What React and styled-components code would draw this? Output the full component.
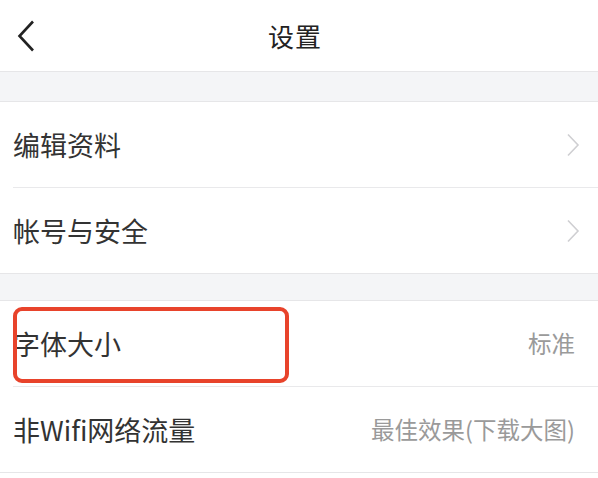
import React from 'react';
import styled, { createGlobalStyle } from 'styled-components';

const GlobalStyle = createGlobalStyle`
  html, body {
    margin: 0;
    padding: 0;
    background: #fff;
  }
  body {
    font-family: 'Noto Sans CJK SC', 'Noto Sans', sans-serif;
  }
`;

const Page = styled.div`
  width: 598px;
  min-height: 478px;
  background: #fff;
`;

const Header = styled.div`
  height: 71px;
  display: flex;
  align-items: center;
  justify-content: center;
  position: relative;
  border-bottom: 1px solid #e6e6e8;
`;

const BackButton = styled.button`
  position: absolute;
  left: 14px;
  top: 18px;
  width: 24px;
  height: 36px;
  padding: 0;
  border: none;
  background: none;
  display: flex;
  align-items: center;
  justify-content: center;
`;

const Title = styled.h1`
  margin: 0 8px 0 0;
  font-size: 26px;
  font-weight: 400;
  color: #222;
  letter-spacing: 1px;
`;

const Gap = styled.div`
  height: ${(props) => props.h}px;
  background: #f4f5f7;
`;

const Section = styled.div`
  border-top: 1px solid #e6e6e8;
  border-bottom: 1px solid #e6e6e8;
  background: #fff;
`;

const Row = styled.div`
  height: 85px;
  display: flex;
  align-items: center;
  justify-content: space-between;
  padding: 0 18px 0 13px;
  position: relative;
  & + & {
    border-top: 1px solid transparent;
  }
  & + &::before {
    content: '';
    position: absolute;
    left: 13px;
    right: 0;
    top: -1px;
    height: 1px;
    background: #e9e9eb;
  }
`;

const Label = styled.span`
  font-size: 27px;
  color: #333;
  line-height: 1;
`;

const Value = styled.span`
  font-size: 23.5px;
  color: #9a9a9a;
  line-height: 1;
  margin-right: 5px;
`;

const Highlight = styled.div`
  position: absolute;
  left: 13px;
  top: 6px;
  width: 268px;
  height: 68px;
  border: 4px solid #e8432b;
  border-radius: 9px;
  pointer-events: none;
`;

const Chevron = () => (
  <svg width="14" height="24" viewBox="0 0 14 24">
    <path d="M2 1.5 L12 12 L2 22.5" fill="none" stroke="#cfcfd2" strokeWidth="1.6" />
  </svg>
);

const BackIcon = () => (
  <svg width="20" height="32" viewBox="0 0 20 32">
    <path d="M17 1.5 L3.5 16 L17 30.5" fill="none" stroke="#222" strokeWidth="2.6" />
  </svg>
);

const sections = [
  [
    { label: '编辑资料', arrow: true },
    { label: '帐号与安全', arrow: true },
  ],
  [
    { label: '字体大小', value: '标准', marked: true },
    { label: '非Wifi网络流量', value: '最佳效果(下载大图)' },
  ],
];

function App() {
  return (
    <Page>
      <GlobalStyle />
      <Header>
        <BackButton aria-label="返回">
          <BackIcon />
        </BackButton>
        <Title>设置</Title>
      </Header>
      <Gap h={29} />
      <Section>
        {sections[0].map((item) => (
          <Row key={item.label}>
            <Label>{item.label}</Label>
            {item.arrow && <Chevron />}
          </Row>
        ))}
      </Section>
      <Gap h={26} />
      <Section>
        {sections[1].map((item) => (
          <Row key={item.label}>
            <Label>{item.label}</Label>
            {item.value && <Value>{item.value}</Value>}
            {item.marked && <Highlight />}
          </Row>
        ))}
      </Section>
    </Page>
  );
}

export default App;
